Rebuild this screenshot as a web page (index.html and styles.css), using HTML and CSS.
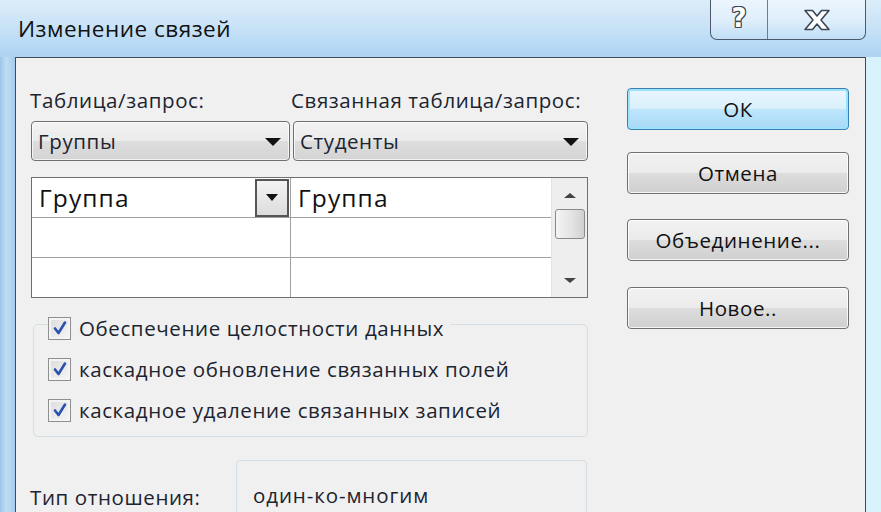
FILE: index.html
```html
<!DOCTYPE html>
<html lang="ru">
<head>
<meta charset="utf-8">
<title>Изменение связей</title>
<link rel="stylesheet" href="styles.css">
</head>
<body>
<div class="window">
  <div class="titlebar">
    <div class="title">Изменение связей</div>
    <div class="caption-buttons">
      <div class="cap-btn help"><span class="help-glyph">?</span></div>
      <div class="cap-btn close">
        <svg width="28" height="22" viewBox="0 0 28 22"><path d="M2 1.5 H9.5 L14 7 L18.5 1.5 H26 L18 11 L26 20.5 H18.5 L14 15 L9.5 20.5 H2 L10 11 Z" fill="#fff" stroke="#3c4654" stroke-width="1.6" stroke-linejoin="round"/></svg>
      </div>
    </div>
  </div>
  <div class="client">
    <div class="left">
      <div class="labels">
        <div class="lbl lbl1">Таблица/запрос:</div>
        <div class="lbl lbl2">Связанная таблица/запрос:</div>
      </div>
      <div class="combos">
        <div class="combo c1"><span>Группы</span><span class="arrow"></span></div>
        <div class="combo c2"><span>Студенты</span><span class="arrow"></span></div>
      </div>
      <div class="grid">
        <div class="cols">
          <div class="col colA">
            <div class="cell first"><span>Группа</span><span class="cell-drop"><span class="arrow small"></span></span></div>
            <div class="cell"></div>
            <div class="cell last"></div>
          </div>
          <div class="col colB">
            <div class="cell first"><span>Группа</span></div>
            <div class="cell"></div>
            <div class="cell last"></div>
          </div>
        </div>
        <div class="scrollbar">
          <div class="sb-arrow up"></div>
          <div class="thumb"></div>
          <div class="sb-space"></div>
          <div class="sb-arrow down"></div>
        </div>
      </div>
      <div class="group">
        <div class="check legend"><span class="box"><svg width="16" height="16" viewBox="0 0 16 16"><path d="M3 8.5 L6.5 13 L13 2.5" fill="none" stroke="#2a50b0" stroke-width="2.6" stroke-linecap="round" stroke-linejoin="round"/></svg></span><span>Обеспечение целостности данных</span></div>
        <div class="check"><span class="box"><svg width="16" height="16" viewBox="0 0 16 16"><path d="M3 8.5 L6.5 13 L13 2.5" fill="none" stroke="#2a50b0" stroke-width="2.6" stroke-linecap="round" stroke-linejoin="round"/></svg></span><span>каскадное обновление связанных полей</span></div>
        <div class="check"><span class="box"><svg width="16" height="16" viewBox="0 0 16 16"><path d="M3 8.5 L6.5 13 L13 2.5" fill="none" stroke="#2a50b0" stroke-width="2.6" stroke-linecap="round" stroke-linejoin="round"/></svg></span><span>каскадное удаление связанных записей</span></div>
      </div>
      <div class="relation">
        <div class="rel-label">Тип отношения:</div>
        <div class="rel-box">один-ко-многим</div>
      </div>
    </div>
    <div class="right">
      <div class="btn default">ОК</div>
      <div class="btn b2">Отмена</div>
      <div class="btn b3">Объединение...</div>
      <div class="btn b4">Новое..</div>
    </div>
  </div>
</div>
</body>
</html>
```
FILE: styles.css
```css
* { box-sizing: border-box; }
html, body { margin: 0; padding: 0; }
body {
  width: 881px; height: 512px; overflow: hidden;
  font-family: "Open Sans", "Noto Sans", sans-serif;
  color: #1a1a1a;
}
.window {
  width: 881px; height: 512px;
  background: linear-gradient(90deg, #9cc6ea 0px, #c0ddf3 6px, #a4cdee 15px, #c2e2f8 40%, #c8e9fa 75%, #d8f3fc 100%);
  display: flex; flex-direction: column;
  overflow: hidden;
}
.titlebar {
  height: 57px; flex: none;
  display: flex; align-items: flex-start;
  background: linear-gradient(180deg, #dcedf9 0%, #c9e3f7 45%, #acd3f2 100%);
}
.title {
  font-size: 22.5px; color: #111;
  margin: 13px 0 0 18px;
  letter-spacing: 0.5px;
}
.caption-buttons {
  margin-left: auto; margin-right: 15px;
  display: flex; height: 40px;
  border: 1px solid #4d5a6b; border-top: none;
  border-radius: 0 0 7px 7px;
  overflow: hidden;
  background: linear-gradient(180deg, rgba(255,255,255,0.45), rgba(235,245,253,0.6) 50%, rgba(195,223,246,0.65));
}
.cap-btn { display: flex; align-items: center; justify-content: center; height: 39px; }
.help { width: 57px; border-right: 1px solid #6d7c90; }
.close { width: 97px; }
.help-glyph {
  font-family: "DejaVu Sans", sans-serif; font-weight: bold;
  font-size: 26px; color: #fff;
  text-shadow: 1px 0 0 #3c4654, -1px 0 0 #3c4654, 0 1px 0 #3c4654, 0 -1px 0 #3c4654,
               1px 1px 0 #3c4654, -1px -1px 0 #3c4654, 1px -1px 0 #3c4654, -1px 1px 0 #3c4654;
  margin-top: -3px;
}
.client {
  flex: 1;
  margin: 0 15px 0 15px;
  border: 1px solid #3f4a56; border-bottom: none;
  background: #f0f0f0;
  display: flex;
  padding: 0 0 0 15px;
  font-size: 20.5px; letter-spacing: 0.6px;
}
.left { width: 557px; display: flex; flex-direction: column; }
.labels { display: flex; margin-top: 30px; height: 24px; line-height: 24px; color: #1c2430; }
.lbl1 { width: 261px; margin-left: -1px; }
.combos { display: flex; gap: 3px; margin-top: 9px; height: 40px; }
.combo {
  height: 40px; border: 1px solid #707070; border-radius: 4px;
  background: linear-gradient(180deg, #f3f3f3 0%, #ebebeb 50%, #dddddd 51%, #d4d4d4 100%);
  box-shadow: inset 0 0 0 1px rgba(255,255,255,0.7);
  display: flex; align-items: center; justify-content: space-between;
  padding: 0 8px 0 6px;
  color: #1c2430;
}
.c1 { width: 259px; }
.c2 { width: 295px; }
.arrow {
  width: 0; height: 0;
  border-left: 8px solid transparent; border-right: 8px solid transparent;
  border-top: 8px solid #111;
  margin-top: 2px;
}
.arrow.small { border-left-width: 6px; border-right-width: 6px; border-top-width: 7px; margin: 0; }
.grid {
  margin-top: 16px; height: 121px;
  border: 1px solid #6f6f6f;
  background: #fff;
  display: flex;
}
.cols { flex: 1; display: flex; }
.col { display: flex; flex-direction: column; }
.colA { width: 259px; border-right: 1px solid #a0a0a0; }
.colB { flex: 1; }
.cell { height: 40px; border-bottom: 1px solid #a0a0a0; display: flex; align-items: center; justify-content: space-between; font-size: 24.5px; letter-spacing: 1.1px; padding-left: 7px; color: #111; }
.cell.last { border-bottom: none; height: 39px; }
.cell-drop {
  width: 34px; height: 38px; border: 2px solid #555;
  background: linear-gradient(180deg, #f3f3f3, #dcdcdc);
  display: flex; align-items: center; justify-content: center;
  margin-right: 1px;
}
.colB .cell { padding-left: 7px; }
.scrollbar { width: 36px; border-left: 1px solid #e4e4e4; background: #eeeeee; display: flex; flex-direction: column; align-items: center; }
.sb-arrow { height: 34px; width: 100%; display: flex; align-items: center; justify-content: center; }
.sb-arrow.up::after { content: ""; border-left: 6px solid transparent; border-right: 6px solid transparent; border-bottom: 5px solid #444; }
.sb-arrow.down::after { content: ""; border-left: 6px solid transparent; border-right: 6px solid transparent; border-top: 5px solid #444; }
.thumb { width: 30px; height: 30px; border: 1px solid #8a8a8a; border-radius: 3px; background: linear-gradient(90deg, #f4f4f4, #e2e2e2 60%, #cfcfcf); margin-top: -3px; }
.sb-space { flex: 1; }
.group {
  margin-top: 26px; height: 113px;
  border: 1px solid #d5dfe5; border-radius: 5px;
  margin-left: 2px;
  display: flex; flex-direction: column;
  padding-left: 14px;
}
.check { display: flex; align-items: center; gap: 8px; height: 24px; color: #1c2430; }
.check .box {
  width: 23px; height: 23px; border: 1px solid #8f8f8f; flex: none;
  background: linear-gradient(135deg, #dcdcdc, #f6f6f6);
  box-shadow: inset 0 0 0 2px #f4f4f4;
  display: flex; align-items: center; justify-content: center;
}
.legend { margin-top: -9px; background: #f0f0f0; align-self: flex-start; padding-right: 6px; }
.group .check + .check { margin-top: 17px; }
.relation { display: flex; margin-top: 23px; }
.rel-label { width: 206px; padding-top: 23px; margin-left: -1px; color: #1c2430; }
.rel-box { width: 351px; height: 60px; border: 1px solid #d5dfe5; border-radius: 4px 4px 0 0; padding: 20px 0 0 16px; color: #1c2430; letter-spacing: 0.9px; }
.right { margin-left: 39px; display: flex; flex-direction: column; padding-top: 30px; }
.btn {
  width: 222px; height: 42px;
  border: 1px solid #707070; border-radius: 4px;
  background: linear-gradient(180deg, #f2f2f2 0%, #ebebeb 50%, #dddddd 51%, #cfcfcf 100%);
  box-shadow: inset 0 0 0 1px rgba(255,255,255,0.8);
  display: flex; align-items: center; justify-content: center;
  color: #111;
}
.btn.default {
  border-color: #3c7fb1;
  background: linear-gradient(180deg, #eaf6fd 0%, #d9f0fc 50%, #bee6fd 51%, #a7d9f5 100%);
  box-shadow: inset 0 0 0 2px #9ce3fb;
}
.b2 { margin-top: 22px; }
.b3 { margin-top: 25px; }
.b4 { margin-top: 26px; }
```
